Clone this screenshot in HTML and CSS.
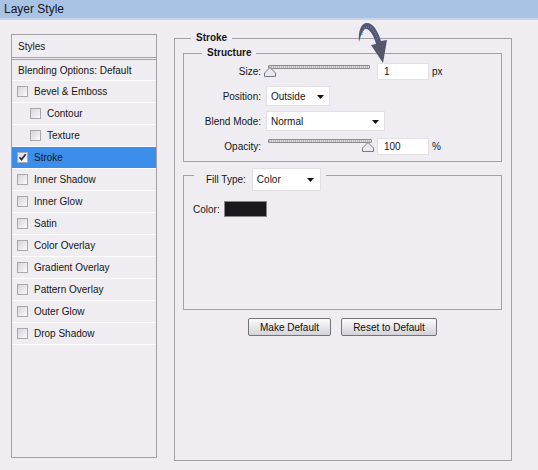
FILE: index.html
```html
<!DOCTYPE html>
<html>
<head>
<meta charset="utf-8">
<title>Layer Style</title>
<link rel="stylesheet" href="styles.css">
</head>
<body>
<div class="titlebar">Layer Style</div>
<div class="main">
  <ul class="styles-list">
    <li class="row head">Styles</li>
    <li class="row blend">Blending Options: Default</li>
    <li class="row"><span class="cb"></span>Bevel &amp; Emboss</li>
    <li class="row sub"><span class="cb"></span>Contour</li>
    <li class="row sub"><span class="cb"></span>Texture</li>
    <li class="row selected"><span class="cb checked"><svg viewBox="0 0 9 9" width="9" height="9"><path d="M1.5 4.2 L3.5 6.6 L7.6 1.2" fill="none" stroke="#2b2a30" stroke-width="1.6"/></svg></span>Stroke</li>
    <li class="row"><span class="cb"></span>Inner Shadow</li>
    <li class="row"><span class="cb"></span>Inner Glow</li>
    <li class="row"><span class="cb"></span>Satin</li>
    <li class="row"><span class="cb"></span>Color Overlay</li>
    <li class="row"><span class="cb"></span>Gradient Overlay</li>
    <li class="row"><span class="cb"></span>Pattern Overlay</li>
    <li class="row"><span class="cb"></span>Outer Glow</li>
    <li class="row"><span class="cb"></span>Drop Shadow</li>
  </ul>

  <fieldset class="panel">
    <legend>Stroke</legend>
    <fieldset class="group structure">
      <legend>Structure</legend>
      <div class="field">
        <span class="label">Size:</span>
        <div class="slider size-slider">
          <span class="track"></span>
          <svg class="thumb thumb-min" viewBox="0 0 12 10" width="12" height="10"><polygon points="6,0.5 11.5,6 11.5,9.5 0.5,9.5 0.5,6" fill="#e9e8ec" stroke="#7c7b82"/></svg>
        </div>
        <div class="num">1</div>
        <span class="unit">px</span>
      </div>
      <div class="field">
        <span class="label">Position:</span>
        <div class="select pos-select">Outside<svg class="caret" viewBox="0 0 7 4" width="7" height="4"><polygon points="0,0 7,0 3.5,4" fill="#111"/></svg></div>
      </div>
      <div class="field">
        <span class="label">Blend Mode:</span>
        <div class="select blend-select">Normal<svg class="caret" viewBox="0 0 7 4" width="7" height="4"><polygon points="0,0 7,0 3.5,4" fill="#111"/></svg></div>
      </div>
      <div class="field">
        <span class="label">Opacity:</span>
        <div class="slider opacity-slider">
          <span class="track"></span>
          <svg class="thumb thumb-max" viewBox="0 0 12 10" width="12" height="10"><polygon points="6,0.5 11.5,6 11.5,9.5 0.5,9.5 0.5,6" fill="#e9e8ec" stroke="#7c7b82"/></svg>
        </div>
        <div class="num">100</div>
        <span class="unit">%</span>
      </div>
    </fieldset>

    <fieldset class="group fill">
      <legend>
        <div class="fill-legend">
          <span class="fill-label">Fill Type:</span>
          <div class="select fill-select">Color<svg class="caret" viewBox="0 0 7 4" width="7" height="4"><polygon points="0,0 7,0 3.5,4" fill="#111"/></svg></div>
        </div>
      </legend>
      <div class="fill-body">
        <div class="color-row"><span>Color:</span><span class="swatch"></span></div>
      </div>
    </fieldset>

    <div class="buttons">
      <button class="btn make">Make Default</button>
      <button class="btn reset">Reset to Default</button>
    </div>
  </fieldset>
</div>

<svg class="arrow" viewBox="0 0 50 55" width="50" height="55">
  <path d="M9 27 C8 16 11 8 17 8 C23 8 28 16 31 26 L37 25 L33 48 L21 30 L26 29 C24 21 20 14 16 14 C13 14 11 20 9 27 Z" fill="#57556a"/>
  <path d="M12 20 C13 13 17 10 21 13 C24 15 26 19 28 25" fill="none" stroke="#4f8fe0" stroke-width="1.3" stroke-dasharray="1 1.2"/>
</svg>
</body>
</html>
```

FILE: styles.css
```css
* { box-sizing: border-box; }

html, body {
  margin: 0;
  padding: 0;
  background: #efedf1;
  font-family: "Liberation Sans", Arial, sans-serif;
  font-size: 10px;
  color: #161519;
}

body {
  width: 538px;
  height: 470px;
  overflow: hidden;
}

.titlebar {
  height: 20px;
  background: #a9c3e4;
  border-bottom: 2px solid #c6d4ea;
  padding-left: 4px;
  font-size: 12px;
  line-height: 18px;
  color: #15151a;
}

.main {
  display: flex;
  align-items: flex-start;
  padding-top: 12px;
}

/* ---------- left list ---------- */
.styles-list {
  list-style: none;
  margin: 2px 0 0 11px;
  padding: 0;
  width: 146px;
  height: 424px;
  border: 1px solid #a3a1a8;
}

.row {
  display: flex;
  align-items: center;
  height: 22px;
  border-bottom: 1px solid #ffffff;
  padding-left: 5px;
}

.row.head {
  height: 23px;
  padding-left: 6px;
  border-bottom: 1px solid #a3a1a8;
}

.row.blend {
  height: 22px;
  margin-top: 1px;
  padding-left: 6px;
  border-top: 1px solid #a3a1a8;
}

.row.sub { padding-left: 18px; }

.row.selected { background: #3b8eea; }

.cb {
  width: 11px;
  height: 11px;
  margin-right: 6px;
  border: 1px solid #a9a8ad;
  background: linear-gradient(135deg, #d6d5da 0%, #ebeaee 60%, #fbfbfc 100%);
  display: flex;
  align-items: center;
  justify-content: center;
  flex: none;
}

.cb.checked { background: linear-gradient(135deg, #dcdbe0, #f8f8fa); }

/* ---------- right panel ---------- */
fieldset {
  margin: 0;
  padding: 0;
  min-width: 0;
  border: 1px solid #a3a1a8;
}

legend {
  padding: 0 5px;
  font-weight: bold;
  font-size: 10px;
  line-height: 12px;
}

.panel {
  margin-left: 17px;
  width: 338px;
  height: 429px;
}

.panel > legend { margin-left: 16px; }

.group { margin: 0 9px 0 8px; }

.structure {
  margin-top: 3px;
  padding-bottom: 3px;
}

.structure > legend { margin-left: 18px; }

.field {
  display: flex;
  align-items: center;
  height: 24px;
  margin-bottom: 1px;
}

.field:last-child { margin-bottom: 0; }

.label {
  width: 77px;
  margin-right: 5px;
  text-align: right;
}

.slider {
  position: relative;
  height: 24px;
  margin-left: 2px;
}

.size-slider { width: 102px; }
.opacity-slider { width: 104px; }

.track {
  position: absolute;
  left: 0;
  right: 0;
  top: 6px;
  height: 4px;
  border: 1px solid #8c8b91;
  border-radius: 1px;
  background: repeating-linear-gradient(90deg, #b9b8bd 0 1px, #dcdbe0 1px 2px);
}

.size-slider .track { top: 6px; }
.opacity-slider .track { top: 5px; }

.thumb { position: absolute; }
.thumb-min { left: -4px; top: 8px; }
.thumb-max { left: 94px; top: 8px; }

.num {
  width: 52px;
  height: 17px;
  background: #fff;
  border: 1px solid #e2e0e6;
  padding-left: 6px;
  line-height: 15px;
  margin-left: 7px;
}

.opacity-slider + .num { margin-left: 5px; }

.unit { margin-left: 3px; }

.select {
  position: relative;
  display: flex;
  align-items: center;
  height: 20px;
  background: #fff;
  border: 1px solid #e2e0e6;
  padding-left: 4px;
  font-weight: normal;
}

.caret {
  position: absolute;
  right: 5px;
  top: 8px;
}

.pos-select { width: 64px; }
.blend-select { width: 119px; }

/* ---------- fill ---------- */
.fill { margin-top: 6px; }

.fill > legend {
  margin-left: 10px;
  height: 14px;
}

.fill-legend {
  display: flex;
  align-items: center;
  height: 23px;
  font-weight: normal;
}

.fill-label { margin-left: 7px; margin-right: 6px; }

.fill-select {
  width: 69px;
  height: 23px;
}

.fill-select .caret { top: 9px; right: 6px; }

.fill-body {
  height: 127px;
  padding: 19px 0 0 9px;
}

.color-row {
  display: flex;
  align-items: center;
  gap: 4px;
}

.swatch {
  width: 43px;
  height: 16px;
  background: #19181d;
  border: 1px solid #86858b;
}

.buttons {
  display: flex;
  justify-content: center;
  gap: 10px;
  margin: 8px 9px 0 8px;
}

.btn {
  height: 18px;
  padding: 0;
  font-family: "Liberation Sans", Arial, sans-serif;
  font-size: 10px;
  color: #111;
  border: 1px solid #74737a;
  border-radius: 2px;
  background: linear-gradient(#fbfbfc, #e3e2e7 60%, #d3d2d8);
}

.btn.make { width: 83px; }
.btn.reset { width: 96px; }

/* ---------- annotation arrow ---------- */
.arrow {
  position: absolute;
  left: 350px;
  top: 15px;
}
```
